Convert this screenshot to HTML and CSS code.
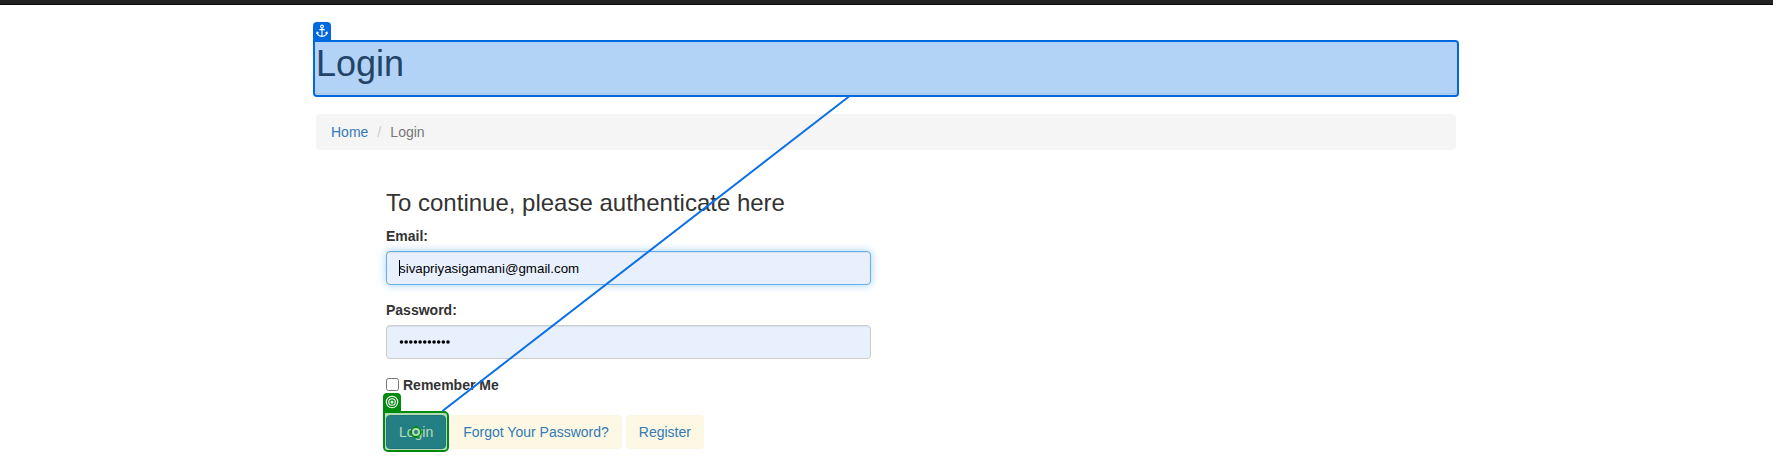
FILE: index.html
```html
<!DOCTYPE html>
<html lang="en">
<head>
<meta charset="utf-8">
<title>Login</title>
<link rel="stylesheet" href="styles.css">
</head>
<body>
<nav class="navbar"></nav>
<main class="container">
  <header class="page-header">
    <h1>Login</h1>
    <div class="mark mark-anchor">
      <span class="tab">
        <svg width="12" height="14" viewBox="0 0 12 14" fill="none" stroke="#fff" stroke-width="1.1"><circle cx="6" cy="2.5" r="1.4"/><path d="M6 4v8.3M3.3 5.600h5.400M1 8.200c.2 2.400 2.200 4 5 4.200 2.800-.2 4.800-1.800 5-4.200M.4 9.900l.7-1.800 1.700 1M11.600 9.900l-.7-1.800-1.700 1"/></svg>
      </span>
    </div>
  </header>
  <ol class="breadcrumb">
    <li><a href="#">Home</a></li>
    <li class="sep">/</li>
    <li>Login</li>
  </ol>
  <form class="login-form">
    <h3>To continue, please authenticate here</h3>
    <div class="form-group">
      <label>Email:</label>
      <div class="form-control focused"><span class="caret"></span>sivapriyasigamani@gmail.com</div>
    </div>
    <div class="form-group">
      <label>Password:</label>
      <div class="form-control dots"><svg width="52" height="6" viewBox="0 0 52 6"><path d="M2.500 3h46.600" stroke="#000" stroke-width="3.600" stroke-linecap="round" stroke-dasharray="0 4.650"/></svg></div>
    </div>
    <div class="remember"><span class="checkbox"></span><label>Remember Me</label></div>
    <div class="buttons">
      <div class="btn btn-primary">Login
        <div class="mark mark-target">
          <span class="tab">
            <svg width="14" height="14" viewBox="0 0 14 14" fill="none" stroke="#fff" stroke-width="1.100"><circle cx="7" cy="7" r="5.700"/><circle cx="7" cy="7" r="3.300"/><circle cx="7" cy="7" r="1"/></svg>
          </span>
          <svg class="pointer" width="16" height="16" viewBox="0 0 16 16" fill="none"><path d="M8 1.500v13M1.500 8h13" stroke="#008a0e" stroke-width="1.500"/><circle cx="8" cy="8" r="4.600" stroke="#008a0e" stroke-width="2"/><circle cx="8" cy="8" r="3" stroke="#b2dcb6" stroke-width="2" fill="#277f70"/></svg>
        </div>
      </div>
      <a class="btn btn-link" href="#">Forgot Your Password?</a>
      <a class="btn btn-link" href="#">Register</a>
    </div>
  </form>
</main>
<svg class="connector" width="1773" height="472" viewBox="0 0 1773 472"><path d="M849 96.500L442.500 411" stroke="#0b6fe6" stroke-width="2"/></svg>
</body>
</html>
```
FILE: styles.css
```css
* { box-sizing: border-box; }
body {
  margin: 0;
  height: 472px;
  overflow: hidden;
  position: relative;
  background: #fff;
  color: #333;
  font: 14px/20px "Liberation Sans", Arial, sans-serif;
}
a { color: #337ab7; text-decoration: none; }
.navbar { height: 5px; background: #222; border-bottom: 1px solid #080808; }
.container { width: 1140px; margin: 0 auto 0 316px; }
.page-header {
  position: relative;
  height: 51px;
  margin: 38px 0 20px;
  padding-top: 1px;
  border-bottom: 1px solid #eee;
}
h1, h3 { margin: 0; font-weight: 400; line-height: 1.1; }
h1 { font-size: 36px; }
h3 { font-size: 24px; margin-bottom: 10px; }
.mark { position: absolute; border: 2px solid; border-radius: 4px; }
.mark-anchor { left: -3px; right: -3px; top: -3px; height: 57px; border-color: #0069e0; background: rgba(0, 105, 224, .3); }
.mark-target { left: -4px; right: -4px; top: -5px; height: 41px; border-color: #008a0e; background: rgba(0, 138, 14, .3); border-radius: 5px; }
.mark-anchor, .mark-target { border-top-left-radius: 0; background-clip: padding-box; }
.tab {
  position: absolute;
  left: -2px;
  top: -20px;
  width: 18px;
  height: 18px;
  border-radius: 4px 4px 0 0;
  display: flex;
  align-items: center;
  justify-content: center;
}
.mark-anchor .tab { background: #0069e0; }
.mark-target .tab { background: #008a0e; }
.breadcrumb {
  display: flex;
  height: 36px;
  margin: 0 0 40px;
  padding: 8px 15px;
  list-style: none;
  color: #777;
  background: #f5f5f5;
  border-radius: 4px;
}
.sep { width: 22px; padding-left: 9px; color: #ccc; }
.login-form { width: 485px; margin-left: 70px; }
.form-group { margin-bottom: 15px; }
label { display: block; font-weight: 700; margin-bottom: 5px; }
.form-control {
  display: flex;
  align-items: center;
  position: relative;
  height: 34px;
  padding: 0 12px;
  border: 1px solid #ccc;
  border-radius: 4px;
  background: #e8f0fe;
  box-shadow: inset 0 1px 1px rgba(0, 0, 0, .075);
  color: #000;
  font-size: 13.333px;
}
.focused { padding-top: 2px; border-color: #66afe9; box-shadow: inset 0 1px 1px rgba(0, 0, 0, .075), 0 0 8px rgba(102, 175, 233, .6); }
.caret { position: absolute; left: 12px; top: 8px; width: 1px; height: 16px; background: #000; }
.remember { display: flex; align-items: center; height: 20px; margin: 16px 0 20px; gap: 4px; }
.remember label { margin: 0; }
.checkbox { width: 13px; height: 13px; margin-bottom: 1px; border: 1px solid #767676; border-radius: 2.5px; }
.buttons { display: flex; gap: 4px; }
.btn { position: relative; height: 34px; padding: 6px 12px; border: 1px solid transparent; border-radius: 4px; }
.btn-primary { color: #fff; background: #337ab7; border-color: #2e6da4; }
.btn-link { background: #fcf8e3; }
.pointer { position: absolute; left: 23px; top: 11px; }
.connector { position: absolute; left: 0; top: 0; }
```
